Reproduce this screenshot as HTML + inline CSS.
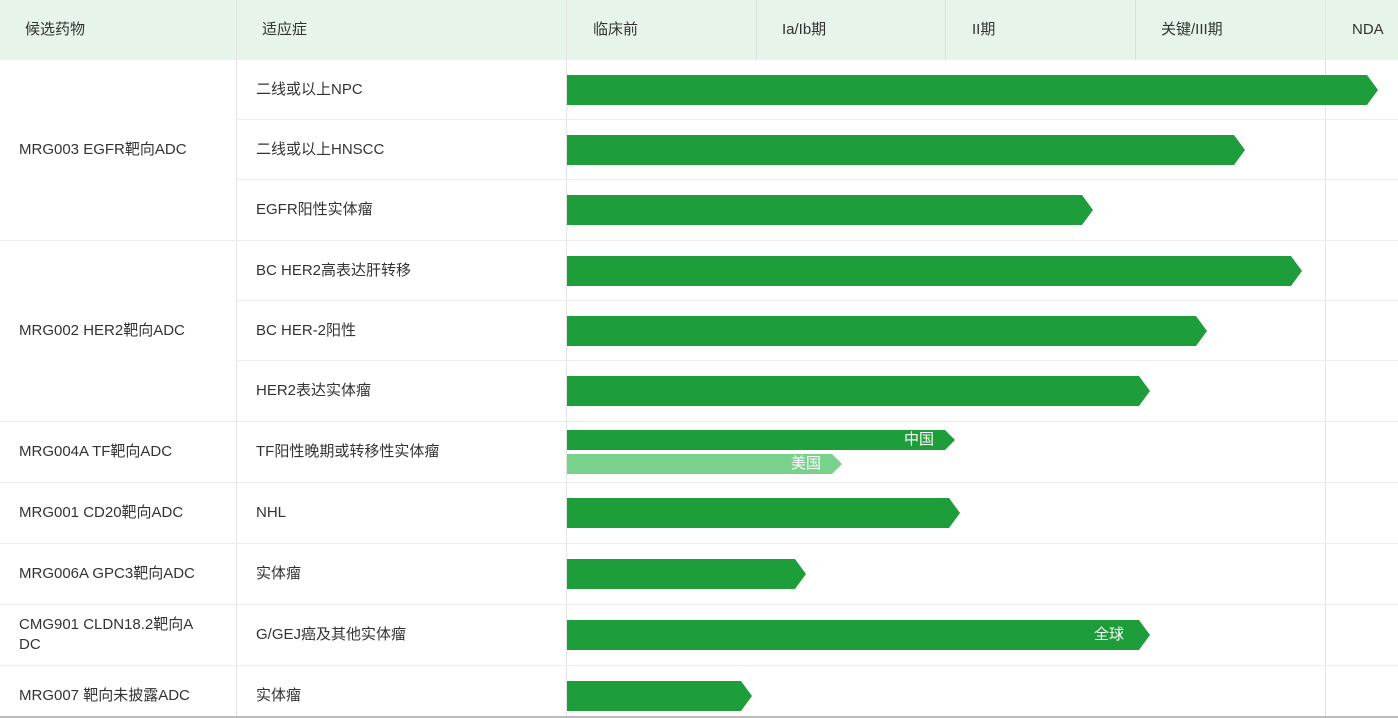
<!DOCTYPE html><html><head><meta charset="utf-8"><style>
body{margin:0;width:1398px;height:718px;overflow:hidden;background:#fff;font-family:"Liberation Sans","Noto Sans CJK SC",sans-serif;font-size:15px;color:#333;position:relative}
.a{position:absolute}
.hd{left:0;top:0;width:1398px;height:60px;background:#e7f4e9}
.t{position:absolute;white-space:nowrap;line-height:20px}
.vl{position:absolute;width:1px;background:#ececec}
.hl{position:absolute;height:1px;background:#ececec}
.bar{position:absolute;left:567px;height:30px;background:#1e9e3b;clip-path:polygon(0 0,calc(100% - 11px) 0,100% 50%,calc(100% - 11px) 100%,0 100%)}
.lbl{position:absolute;color:#fff;font-size:15px;line-height:20px}
</style></head><body>
<div class="a hd"></div>
<div class="vl" style="left:236px;top:0;height:718px;background:#e4e4e4"></div>
<div class="vl" style="left:566px;top:0;height:718px;background:#e4e4e4"></div>
<div class="vl" style="left:756px;top:0;height:60px;background:#dcdcdc"></div>
<div class="vl" style="left:945px;top:0;height:60px;background:#dcdcdc"></div>
<div class="vl" style="left:1135px;top:0;height:60px;background:#dcdcdc"></div>
<div class="vl" style="left:1325px;top:0;height:718px;background:#e4e4e4"></div>
<div class="t" style="left:25px;top:20px">候选药物</div>
<div class="t" style="left:262px;top:20px">适应症</div>
<div class="t" style="left:593px;top:20px">临床前</div>
<div class="t" style="left:782px;top:20px">Ia/Ib期</div>
<div class="t" style="left:972px;top:20px">II期</div>
<div class="t" style="left:1161px;top:20px">关键/III期</div>
<div class="t" style="left:1352px;top:20px">NDA</div>
<!-- row lines -->
<div class="hl" style="left:236px;top:119px;width:1162px"></div>
<div class="hl" style="left:236px;top:179px;width:1162px"></div>
<div class="hl" style="left:0;top:240px;width:1398px"></div>
<div class="hl" style="left:236px;top:300px;width:1162px"></div>
<div class="hl" style="left:236px;top:360px;width:1162px"></div>
<div class="hl" style="left:0;top:421px;width:1398px"></div>
<div class="hl" style="left:0;top:482px;width:1398px"></div>
<div class="hl" style="left:0;top:543px;width:1398px"></div>
<div class="hl" style="left:0;top:604px;width:1398px"></div>
<div class="hl" style="left:0;top:665px;width:1398px"></div>
<div class="hl" style="left:0;top:716px;width:1398px;height:2px;background:#bbb"></div>
<!-- col1 -->
<div class="t" style="left:19px;top:140px">MRG003 EGFR靶向ADC</div>
<div class="t" style="left:19px;top:321px">MRG002 HER2靶向ADC</div>
<div class="t" style="left:19px;top:442px">MRG004A TF靶向ADC</div>
<div class="t" style="left:19px;top:503px">MRG001 CD20靶向ADC</div>
<div class="t" style="left:19px;top:564px">MRG006A GPC3靶向ADC</div>
<div class="t" style="left:19px;top:615px">CMG901 CLDN18.2靶向A<br>DC</div>
<div class="t" style="left:19px;top:686px">MRG007 靶向未披露ADC</div>
<!-- col2 -->
<div class="t" style="left:256px;top:80px">二线或以上NPC</div>
<div class="t" style="left:256px;top:140px">二线或以上HNSCC</div>
<div class="t" style="left:256px;top:200px">EGFR阳性实体瘤</div>
<div class="t" style="left:256px;top:261px">BC HER2高表达肝转移</div>
<div class="t" style="left:256px;top:321px">BC HER-2阳性</div>
<div class="t" style="left:256px;top:381px">HER2表达实体瘤</div>
<div class="t" style="left:256px;top:442px">TF阳性晚期或转移性实体瘤</div>
<div class="t" style="left:256px;top:503px">NHL</div>
<div class="t" style="left:256px;top:564px">实体瘤</div>
<div class="t" style="left:256px;top:625px">G/GEJ癌及其他实体瘤</div>
<div class="t" style="left:256px;top:686px">实体瘤</div>
<!-- bars -->
<div class="bar" style="top:75px;width:811px"></div>
<div class="bar" style="top:135px;width:678px"></div>
<div class="bar" style="top:195px;width:526px"></div>
<div class="bar" style="top:256px;width:735px"></div>
<div class="bar" style="top:316px;width:640px"></div>
<div class="bar" style="top:376px;width:583px"></div>
<div class="bar" style="top:430px;height:20px;width:388px;clip-path:polygon(0 0,calc(100% - 10px) 0,100% 50%,calc(100% - 10px) 100%,0 100%)"></div>
<div class="lbl" style="left:904px;top:430px">中国</div>
<div class="bar" style="top:454px;height:20px;width:275px;background:#79d28c;clip-path:polygon(0 0,calc(100% - 10px) 0,100% 50%,calc(100% - 10px) 100%,0 100%)"></div>
<div class="lbl" style="left:791px;top:454px">美国</div>
<div class="bar" style="top:498px;width:393px"></div>
<div class="bar" style="top:559px;width:239px"></div>
<div class="bar" style="top:620px;width:583px"></div>
<div class="lbl" style="left:1094px;top:625px">全球</div>
<div class="bar" style="top:681px;width:185px"></div>
</body></html>
